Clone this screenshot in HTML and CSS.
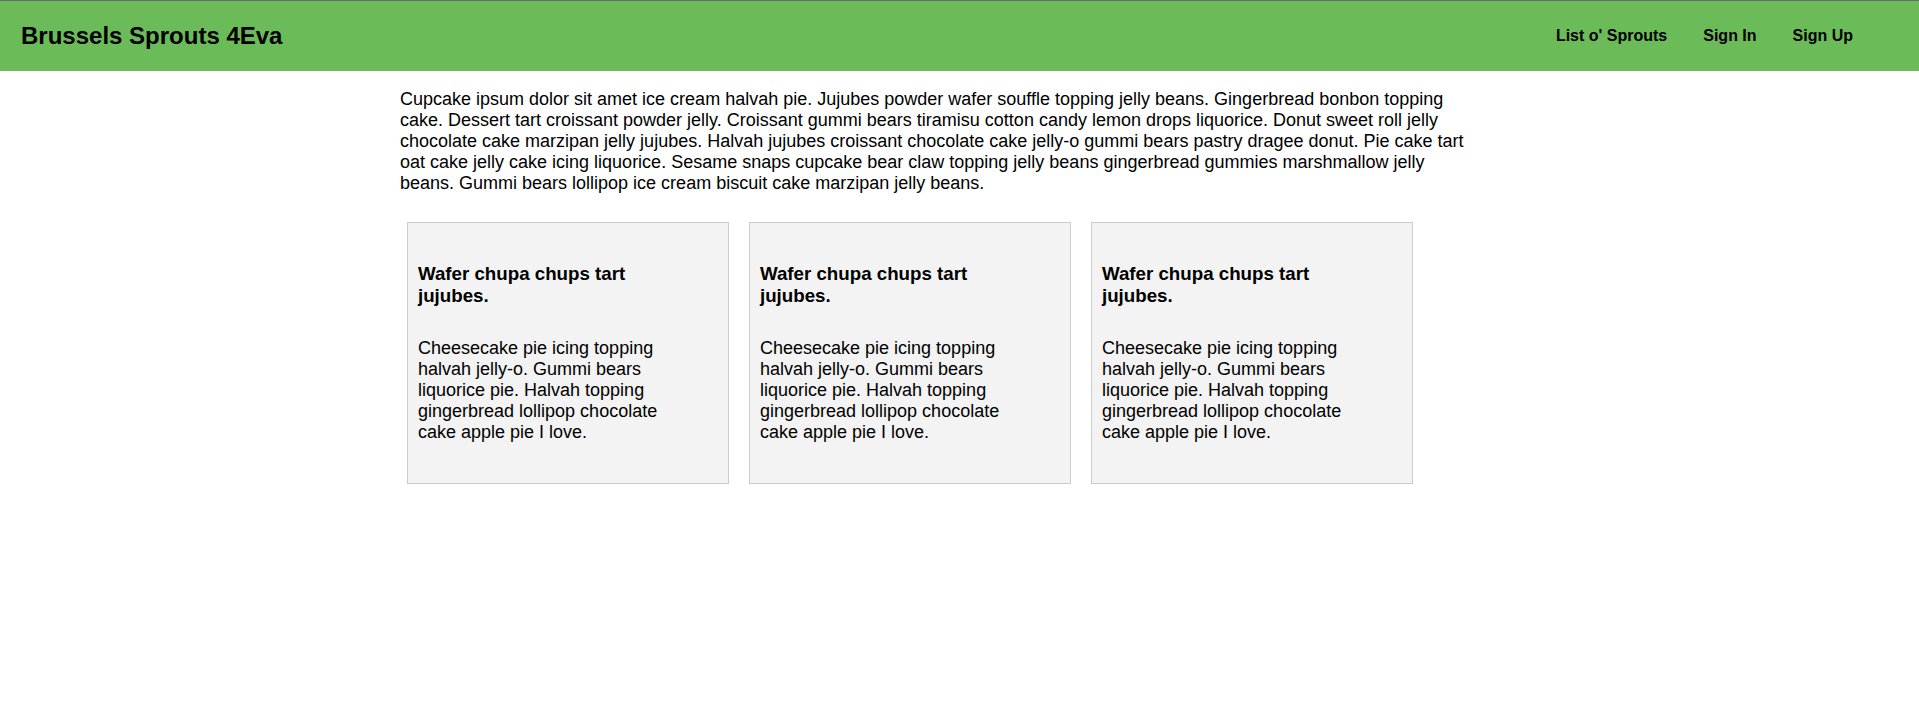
FILE: index.html
```html
<!DOCTYPE html>
<html lang="en">
<head>
<meta charset="utf-8">
<title>Brussels Sprouts 4Eva</title>
<link rel="stylesheet" href="styles.css">
</head>
<body>
<header class="topbar">
  <h1 class="brand">Brussels Sprouts 4Eva</h1>
  <nav class="nav">
    <a class="nav-link" href="#">List o' Sprouts</a>
    <a class="nav-link" href="#">Sign In</a>
    <a class="nav-link" href="#">Sign Up</a>
  </nav>
</header>
<main class="content">
  <p class="intro">Cupcake ipsum dolor sit amet ice cream halvah pie. Jujubes powder wafer souffle topping jelly beans. Gingerbread bonbon topping cake. Dessert tart croissant powder jelly. Croissant gummi bears tiramisu cotton candy lemon drops liquorice. Donut sweet roll jelly chocolate cake marzipan jelly jujubes. Halvah jujubes croissant chocolate cake jelly-o gummi bears pastry dragee donut. Pie cake tart oat cake jelly cake icing liquorice. Sesame snaps cupcake bear claw topping jelly beans gingerbread gummies marshmallow jelly beans. Gummi bears lollipop ice cream biscuit cake marzipan jelly beans.</p>
  <div class="cards">
    <div class="card">
      <h3 class="card-title">Wafer chupa chups tart jujubes.</h3>
      <p class="card-text">Cheesecake pie icing topping halvah jelly-o. Gummi bears liquorice pie. Halvah topping gingerbread lollipop chocolate cake apple pie I love.</p>
    </div>
    <div class="card">
      <h3 class="card-title">Wafer chupa chups tart jujubes.</h3>
      <p class="card-text">Cheesecake pie icing topping halvah jelly-o. Gummi bears liquorice pie. Halvah topping gingerbread lollipop chocolate cake apple pie I love.</p>
    </div>
    <div class="card">
      <h3 class="card-title">Wafer chupa chups tart jujubes.</h3>
      <p class="card-text">Cheesecake pie icing topping halvah jelly-o. Gummi bears liquorice pie. Halvah topping gingerbread lollipop chocolate cake apple pie I love.</p>
    </div>
  </div>
</main>
</body>
</html>
```

FILE: styles.css
```css
html, body {
  margin: 0;
  padding: 0;
}
body {
  font-family: "Liberation Sans", Arial, sans-serif;
  font-size: 18px;
  color: #000;
  background: #fff;
}
.topbar {
  display: flex;
  align-items: center;
  justify-content: space-between;
  height: 70px;
  border-top: 1px solid #6b6b6b;
  background: #6cbb59;
  padding-left: 21px;
}
.brand {
  margin: 0;
  font-size: 24px;
  font-weight: bold;
}
.nav {
  display: flex;
  padding-right: 48px;
}
.nav-link {
  padding: 0 18px;
  font-size: 16px;
  font-weight: bold;
  color: #000;
  text-decoration: none;
}
.content {
  margin-left: 397px;
  width: 1078px;
}
.intro {
  margin: 18px 0 18px 3px;
}
.cards {
  display: flex;
}
.card {
  box-sizing: border-box;
  width: 322px;
  height: 262px;
  margin: 10px;
  padding: 40px 50px 0 10px;
  background: #f3f3f3;
  border: 1px solid #cccccc;
}
.card-title {
  margin: 0 0 31px;
  font-size: 18.72px;
  font-weight: bold;
}
.card-text {
  margin: 0;
}
```
